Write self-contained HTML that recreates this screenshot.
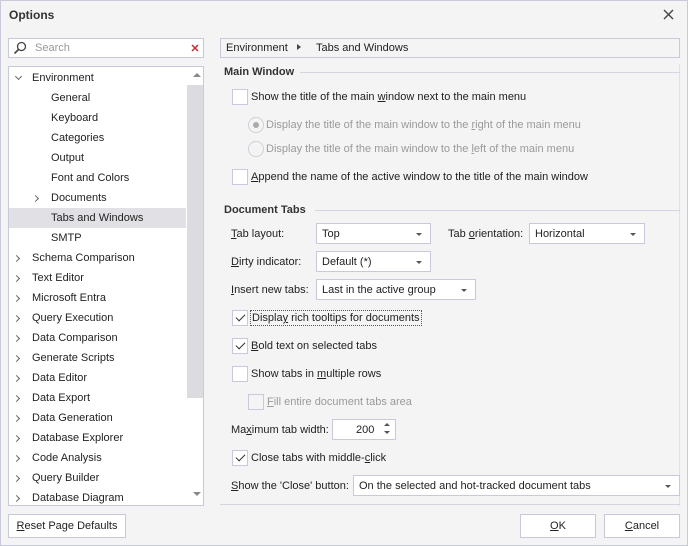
<!DOCTYPE html>
<html><head><style>
*{box-sizing:border-box;margin:0;padding:0}
body{width:688px;height:546px;background:#f4f4f4;font-family:"Liberation Sans",sans-serif;font-size:11px;color:#222;position:relative;overflow:hidden}
.frame{position:absolute;left:0;top:0;width:688px;height:546px;border:1px solid #c9c9dc;pointer-events:none}
.a{position:absolute;white-space:nowrap}
.box{position:absolute;background:#fff;border:1px solid #c9c9dc}
.cb{position:absolute;width:16px;height:16px;background:#fff;border:1px solid #c9c9dc}
.cb.d{background:#f4f4f4}
.ck::after{content:"";position:absolute;left:5px;top:1px;width:4px;height:8px;border:solid #333;border-width:0 1.3px 1.3px 0;transform:rotate(45deg)}
.rd{position:absolute;width:16px;height:16px;border-radius:50%;border:1px solid #d0d0dc;background:#f4f4f4}
.dis{color:#9a9a9a}
.dd{position:absolute;background:#fff;border:1px solid #c9c9dc;height:21px;padding:4px 5px;white-space:nowrap}
.dd::after{content:"";position:absolute;right:8px;top:9px;border:3px solid transparent;border-top:3px solid #555}
.t{position:absolute;white-space:nowrap;height:20px;line-height:20px}
.ar{position:absolute;width:5px;height:5px;border:solid #666;border-width:0 1.2px 1.2px 0}
.hd{position:absolute;font-weight:bold;color:#333;white-space:nowrap}
.ln{position:absolute;height:1px;background:#d4d4e4}
.btn{position:absolute;border:1px solid #c9c9dc;background:#fff;text-align:center;line-height:22px}
u{text-decoration:underline}
</style></head><body>
<div class="a" style="left:9px;top:8px;font-weight:bold;font-size:12px;color:#333">Options</div>
<svg class="a" style="left:663px;top:9px" width="11" height="11"><path d="M1 1L10 10M10 1L1 10" stroke="#444" stroke-width="1.4"/></svg>

<div class="box" style="left:8px;top:38px;width:196px;height:20px"></div>
<svg class="a" style="left:13px;top:41px" width="14" height="14"><circle cx="8.5" cy="5.5" r="4" stroke="#444" fill="none" stroke-width="1.3"/><path d="M5.5 8.5L1.5 12.5" stroke="#444" stroke-width="1.6"/></svg>
<div class="a" style="left:35px;top:42px;color:#999">Search</div>
<svg class="a" style="left:191px;top:44px" width="8" height="8"><path d="M1 1L7 7M7 1L1 7" stroke="#c03030" stroke-width="1.5"/></svg>

<div class="box" style="left:8px;top:66px;width:196px;height:440px;overflow:hidden">
<div style="position:absolute;left:177px;top:0;width:18px;height:438px;background:#fff"></div>
<div style="position:absolute;left:178px;top:18px;width:17px;height:313px;background:#dcdce0"></div>
<div style="position:absolute;left:184px;top:6px;border:4px solid transparent;border-bottom:4px solid #888;border-top:0"></div>
<div style="position:absolute;left:184px;top:425px;border:4px solid transparent;border-top:4px solid #888;border-bottom:0"></div>
<div style="position:absolute;left:0;top:141px;width:177px;height:20px;background:#e1e1e5"></div>
</div>
<div id="tree"></div>

<div class="box" style="left:220px;top:38px;width:460px;height:20px;background:#f4f4f4"></div>
<div class="a" style="left:226px;top:42px">Environment</div>
<div class="a" style="left:297px;top:44px;border:3px solid transparent;border-left:4px solid #444;border-right:0"></div>
<div class="a" style="left:316px;top:42px">Tabs and Windows</div>
<div class="a" style="left:679px;top:64px;width:1px;height:442px;background:#e0e0ea"></div>

<div class="hd" style="left:224px;top:66px">Main Window</div>
<div class="ln" style="left:300px;top:72px;width:380px"></div>
<div class="cb" style="left:232px;top:89px"></div><div class="a" style="left:251px;top:91px">Show the title of the main <u>w</u>indow next to the main menu</div>
<div class="rd" style="left:248px;top:117px"><div style="position:absolute;left:4px;top:4px;width:6px;height:6px;border-radius:50%;background:#aaa"></div></div><div class="a dis" style="left:266px;top:119px">Display the title of the main window to the <u>r</u>ight of the main menu</div>
<div class="rd" style="left:248px;top:141px"></div><div class="a dis" style="left:266px;top:143px">Display the title of the main window to the <u>l</u>eft of the main menu</div>
<div class="cb" style="left:232px;top:169px"></div><div class="a" style="left:251px;top:171px"><u>A</u>ppend the name of the active window to the title of the main window</div>

<div class="hd" style="left:224px;top:204px">Document Tabs</div>
<div class="ln" style="left:315px;top:210px;width:365px"></div>
<div class="a" style="left:231px;top:228px"><u>T</u>ab layout:</div>
<div class="dd" style="left:316px;top:223px;width:115px">Top</div>
<div class="a" style="left:448px;top:228px">Tab <u>o</u>rientation:</div>
<div class="dd" style="left:529px;top:223px;width:116px">Horizontal</div>
<div class="a" style="left:231px;top:256px"><u>D</u>irty indicator:</div>
<div class="dd" style="left:316px;top:251px;width:115px">Default (*)</div>
<div class="a" style="left:231px;top:284px"><u>I</u>nsert new tabs:</div>
<div class="dd" style="left:316px;top:279px;width:160px">Last in the active group</div>
<div class="cb ck" style="left:232px;top:310px"></div><div class="a" style="left:250px;top:310px;border:1px dotted #555;padding:0 1px;height:16px;line-height:14px">Displa<u>y</u> rich tooltips for documents</div>
<div class="cb ck" style="left:232px;top:338px"></div><div class="a" style="left:251px;top:340px"><u>B</u>old text on selected tabs</div>
<div class="cb" style="left:232px;top:366px"></div><div class="a" style="left:251px;top:368px">Show tabs in <u>m</u>ultiple rows</div>
<div class="cb d" style="left:248px;top:394px"></div><div class="a dis" style="left:267px;top:396px"><u>F</u>ill entire document tabs area</div>
<div class="a" style="left:231px;top:424px">Ma<u>x</u>imum tab width:</div>
<div class="box" style="left:332px;top:419px;width:64px;height:21px"></div>
<div class="a" style="left:356px;top:424px">200</div>
<div class="a" style="left:384px;top:423px;border:3px solid transparent;border-bottom:3px solid #555;border-top:0"></div>
<div class="a" style="left:384px;top:431px;border:3px solid transparent;border-top:3px solid #555;border-bottom:0"></div>
<div class="cb ck" style="left:232px;top:450px"></div><div class="a" style="left:251px;top:452px">Close tabs with middle-<u>c</u>lick</div>
<div class="a" style="left:231px;top:480px"><u>S</u>how the 'Close' button:</div>
<div class="dd" style="left:353px;top:475px;width:327px">On the selected and hot-tracked document tabs</div>
<div class="ln" style="left:220px;top:504px;width:460px"></div>

<div class="btn" style="left:8px;top:514px;width:118px;height:24px"><u>R</u>eset Page Defaults</div>
<div class="btn" style="left:520px;top:514px;width:76px;height:24px"><u>O</u>K</div>
<div class="btn" style="left:604px;top:514px;width:76px;height:24px"><u>C</u>ancel</div>
<div class="frame"></div>

<script>
var items=[["Environment",0,"o"],["General",1],["Keyboard",1],["Categories",1],["Output",1],["Font and Colors",1],["Documents",1,"c"],["Tabs and Windows",1],["SMTP",1],["Schema Comparison",0,"c"],["Text Editor",0,"c"],["Microsoft Entra",0,"c"],["Query Execution",0,"c"],["Data Comparison",0,"c"],["Generate Scripts",0,"c"],["Data Editor",0,"c"],["Data Export",0,"c"],["Data Generation",0,"c"],["Database Explorer",0,"c"],["Code Analysis",0,"c"],["Query Builder",0,"c"],["Database Diagram",0,"c"]];
var h="";items.forEach(function(it,i){var y=68+i*20;var x=it[1]?51:32;
h+='<div class="t" style="left:'+x+'px;top:'+y+'px">'+it[0]+'</div>';
var ax=it[1]?35:16;
if(it[2]=="o")h+='<div class="ar" style="left:'+ax+'px;top:'+(y+6)+'px;transform:rotate(45deg)"></div>';
if(it[2]=="c")h+='<div class="ar" style="left:'+(ax-2)+'px;top:'+(y+8)+'px;transform:rotate(-45deg)"></div>';});
document.getElementById("tree").innerHTML=h;
</script>
</body></html>
